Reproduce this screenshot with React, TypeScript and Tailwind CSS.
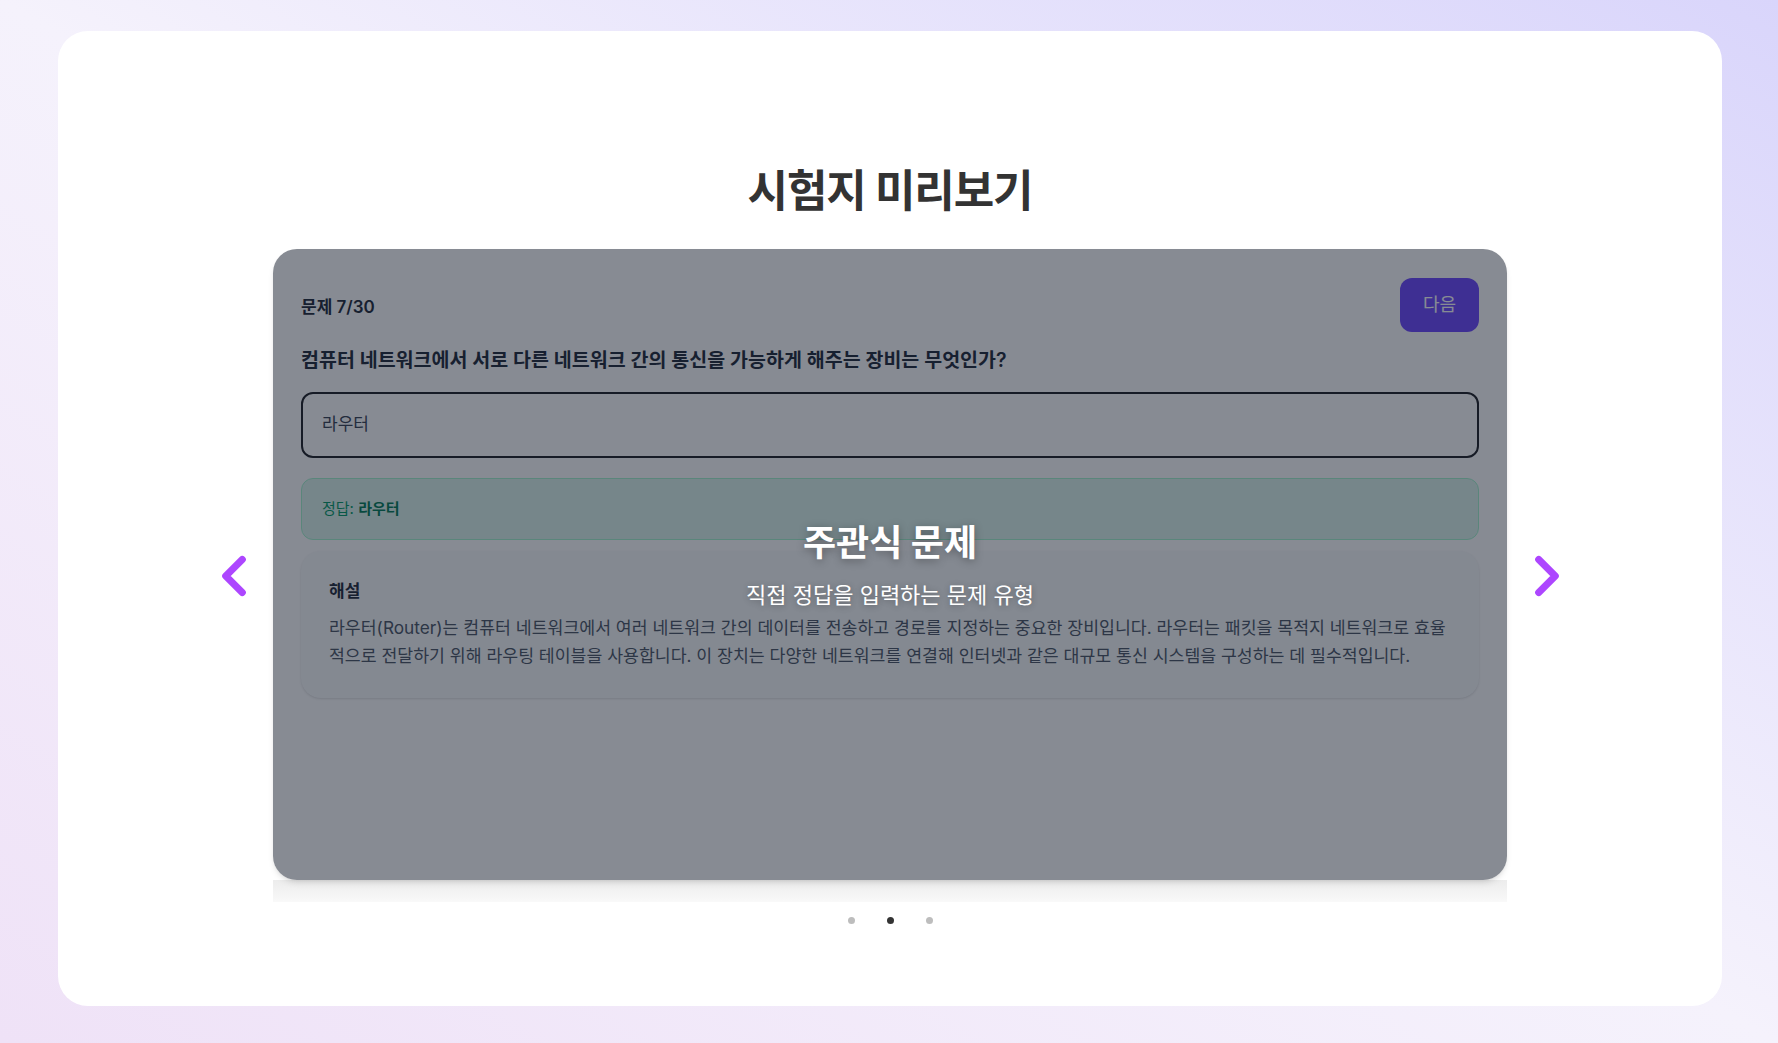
import React from 'react';
import { ChevronLeft, ChevronRight } from 'lucide-react';

const App: React.FC = () => {
  return (
    <div className="min-h-screen w-full bg-linear-to-tr from-[#efe2f7] via-[#f5f2fc] to-[#d9d5fb] pt-[31px] pl-[58px] pr-[56px] pb-[37px] font-[Inter,'Noto_Sans_CJK_KR',sans-serif]">
      <div className="bg-white rounded-[30px] h-[975px] pt-[136px] flex flex-col items-center">
        <h1 className="text-[44px] leading-[48px] font-bold text-[#333] tracking-tight">시험지 미리보기</h1>

        <div className="relative mt-[34px] w-[1234px]">
          {/* slide card */}
          <div className="relative h-[631px] rounded-3xl overflow-hidden bg-white shadow-md">
            <div className="px-7 pt-[29px] pb-7 flex flex-col">
              <div className="flex items-center justify-between">
                <span className="mt-[5px] text-[17px] font-semibold text-gray-800">문제 7/30</span>
                <button className="w-[79px] h-[54px] rounded-xl bg-[#6c47ff] text-white text-lg">다음</button>
              </div>
              <p className="mt-[14px] text-[19.5px] leading-7 font-semibold text-gray-800">
                컴퓨터 네트워크에서 서로 다른 네트워크 간의 통신을 가능하게 해주는 장비는 무엇인가?
              </p>
              <div className="mt-[18px] h-[66px] rounded-xl border-2 border-[#1d1f24] px-[19px] flex items-center text-[17px] text-gray-700">
                라우터
              </div>
              <div className="mt-5 h-[62px] rounded-xl border border-emerald-200 bg-[#ddf4ed] px-[20px] flex items-center text-[15px] text-emerald-600">
                정답:&nbsp;<span className="font-bold text-emerald-700">라우터</span>
              </div>
              <div className="mt-[11px] rounded-[20px] bg-gray-50 p-7 pt-[28px] shadow-sm">
                <div className="text-[17px] leading-6 font-bold text-gray-800">해설</div>
                <p className="mt-[11px] text-[17.25px] leading-7 text-gray-600">
                  <span className="block whitespace-nowrap">
                    라우터(Router)는 컴퓨터 네트워크에서 여러 네트워크 간의 데이터를 전송하고 경로를 지정하는 중요한 장비입니다. 라우터는 패킷을 목적지 네트워크로 효율
                  </span>
                  <span className="block whitespace-nowrap">
                    적으로 전달하기 위해 라우팅 테이블을 사용합니다. 이 장치는 다양한 네트워크를 연결해 인터넷과 같은 대규모 통신 시스템을 구성하는 데 필수적입니다.
                  </span>
                </p>
              </div>
            </div>

            {/* hover overlay */}
            <div className="absolute inset-0 bg-gray-900/50 flex flex-col items-center justify-center">
              <div className="text-[36px] leading-[44px] font-bold text-white [text-shadow:0_2px_8px_rgba(0,0,0,0.35)]">
                주관식 문제
              </div>
              <div className="mt-4 text-[22px] leading-7 text-white [text-shadow:0_1px_6px_rgba(0,0,0,0.3)]">
                직접 정답을 입력하는 문제 유형
              </div>
            </div>
          </div>
          <div className="h-[22px] bg-linear-to-b from-[#ececec] to-[#f9f9f9]" />

          <button className="absolute -left-[72px] top-1/2 -translate-y-1/2 text-purple-500">
            <ChevronLeft size={66} strokeWidth={2.6} />
          </button>
          <button className="absolute -right-[73px] top-1/2 -translate-y-1/2 text-purple-500">
            <ChevronRight size={66} strokeWidth={2.6} />
          </button>
        </div>

        <div className="mt-[15px] flex items-center gap-[32px]">
          <span className="w-[7px] h-[7px] rounded-full bg-[#bdbdbd]" />
          <span className="w-[7px] h-[7px] rounded-full bg-[#333]" />
          <span className="w-[7px] h-[7px] rounded-full bg-[#bdbdbd]" />
        </div>
      </div>
    </div>
  );
};

export default App;
